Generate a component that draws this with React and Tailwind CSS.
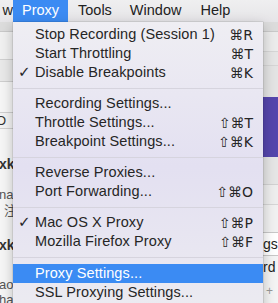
import React from "react";

const font = { fontFamily: '"Liberation Sans", "DejaVu Sans", sans-serif' };

function Item({ label, shortcut, checked, active }) {
  return (
    <div
      className={`flex h-[19px] items-center pr-[10px] ${active ? "bg-[#3b8bf3] text-white" : "text-[#262626]"}`}
    >
      <div className="w-[22px] pl-[5px] text-[15px] font-bold leading-none" style={{ fontFamily: '"DejaVu Sans", sans-serif' }}>{checked ? "✓" : ""}</div>
      <div className="flex-1 text-[14.5px] leading-none tracking-[0.1px]">{label}</div>
      <div className="text-[14px] leading-none" style={{ fontFamily: '"DejaVu Sans", sans-serif' }}>{shortcut}</div>
    </div>
  );
}

function Sep({ h = "h-[12px]" }) {
  return (
    <div className={`${h} flex items-center`}>
      <div className="h-px w-full bg-[#d6d4de]" />
    </div>
  );
}

export default function App() {
  return (
    <div className="relative h-[303px] w-[278px] overflow-hidden bg-white" style={font}>
      {/* menu bar */}
      <div className="flex h-[22px] items-center bg-gradient-to-b from-[#efeff0] to-[#e6e5e8] text-[14.5px] text-[#222]">
        <div className="w-[13px] overflow-hidden pl-0 text-right">
          <span className="-ml-[6px]">w</span>
        </div>
        <div className="flex h-full w-[55px] items-center bg-[#3b8bf3] pl-[9px] text-white">Proxy</div>
        <div className="ml-[10px]">Tools</div>
        <div className="ml-[18px]">Window</div>
        <div className="ml-[19px]">Help</div>
      </div>

      {/* background window content */}
      <div className="flex">
        <div className="flex w-[13px] flex-col overflow-hidden text-[14px] text-[#333]">
          <div className="h-[10px] border-b border-[#c9c9c9] bg-[#dcdcdc]" />
          <div className="h-[28px] border-b border-[#d0d0d0] bg-[#f1f1f1]" />
          <div className="h-[22px] border-b border-[#cfcfcf] bg-[#e9e9e9]" />
          <div className="h-[30px] bg-[#f6f6f6]" />
          <div className="flex h-[17px] items-center border-y border-[#cfcfcf] bg-[#f3f3f3] text-[13px]">
            <span className="-ml-[4px]">O</span>
          </div>
          <div className="h-[24px] bg-[#f6f6f6]" />
          <div className="flex h-[22px] items-center bg-[#f6f6f6] font-bold">
            <span className="-ml-[1px]">xkin</span>
          </div>
          <div className="h-[12px] bg-[#f6f6f6]" />
          <div className="flex h-[16px] items-center bg-[#f6f6f6] text-[13px] text-[#555]">
            <span className="-ml-[1px]">nap</span>
          </div>
          <div className="flex h-[14px] items-center bg-[#f6f6f6] text-[13px] text-[#555]" style={{ fontFamily: '"Noto Sans CJK SC", sans-serif' }}>
            <span className="ml-[4px]">注</span>
          </div>
          <div className="h-[18px] bg-[#f6f6f6]" />
          <div className="flex h-[20px] items-center bg-[#f6f6f6] font-bold">
            <span className="-ml-[1px]">xkin</span>
          </div>
          <div className="h-[22px] bg-[#f6f6f6]" />
          <div className="flex h-[15px] items-center bg-[#f6f6f6] text-[13px] text-[#555]">
            <span className="-ml-[1px]">ao</span>
          </div>
          <div className="flex h-[15px] items-center bg-[#f6f6f6] text-[13px] text-[#555]">
            <span className="-ml-[1px]">ha</span>
          </div>
        </div>
        <div className="w-[250px]" />
        <div className="flex w-[15px] flex-col overflow-hidden text-[14px] text-[#222]">
          <div className="h-[10px] border-b border-[#c9c9c9] bg-[#dcdcdc]" />
          <div className="h-[20px] border-b border-[#d6d6d6] bg-[#ececec]" />
          <div className="h-[14px] border-b border-[#d6d6d6] bg-[#e6e6e6]" />
          <div className="h-[31px] bg-[#e4e4e4]" />
          <div className="h-[60px] bg-[#5546ad]" />
          <div className="h-[28px] border-b border-[#d2d2d2] bg-[#e6e6e6]" />
          <div className="h-[20px] border-b border-[#d6d6d6] bg-[#eeeeee]" />
          <div className="h-[27px] bg-[#f1f1f1]" />
          <div className="flex h-[24px] items-center border-y border-[#c8c8c8] bg-white">
            <span>gs</span>
          </div>
          <div className="flex h-[22px] items-center bg-[#f4f4f4]">
            <span>rd</span>
          </div>
          <div className="flex h-[25px] items-center bg-[#f4f4f4] text-[#999] text-[12px]">
            <span className="ml-[3px]">+</span>
          </div>
        </div>
      </div>

      {/* dropdown menu */}
      <div
        className="absolute left-[13px] top-[22px] h-[290px] w-[250px] bg-gradient-to-b from-[#efeef3] via-[#e3e0f1] to-[#ecebf1] pt-[3px] shadow-[0_4px_12px_rgba(0,0,0,0.25),0_0_0_0.5px_rgba(0,0,0,0.15)]"
      >
        <Item label="Stop Recording (Session 1)" shortcut="⌘R" />
        <Item label="Start Throttling" shortcut="⌘T" />
        <Item label="Disable Breakpoints" shortcut="⌘K" checked />
        <Sep />
        <Item label="Recording Settings..." />
        <Item label="Throttle Settings..." shortcut="⇧⌘T" />
        <Item label="Breakpoint Settings..." shortcut="⇧⌘K" />
        <Sep />
        <Item label="Reverse Proxies..." />
        <Item label="Port Forwarding..." shortcut="⇧⌘O" />
        <Sep />
        <Item label="Mac OS X Proxy" shortcut="⇧⌘P" checked />
        <Item label="Mozilla Firefox Proxy" shortcut="⇧⌘F" />
        <Sep h="h-[13px]" />
        <Item label="Proxy Settings..." active />
        <Item label="SSL Proxying Settings..." />
      </div>
    </div>
  );
}
